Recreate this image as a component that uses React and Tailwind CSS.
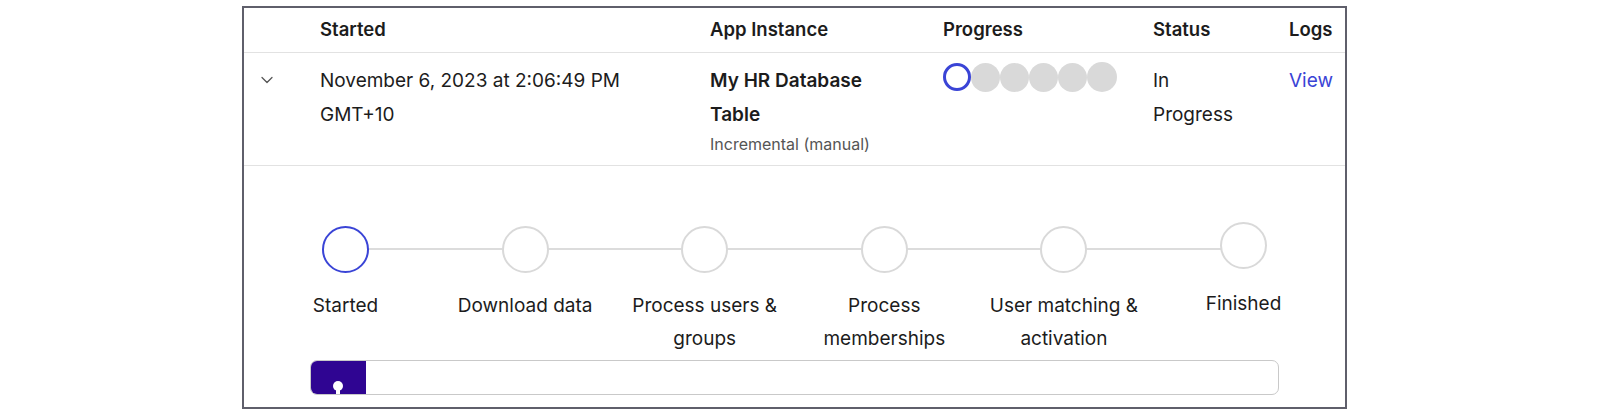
import React from "react";
import { ChevronDown } from "lucide-react";

const steps = [
  "Started",
  "Download data",
  "Process users & groups",
  "Process memberships",
  "User matching & activation",
  "Finished",
];

const Step = ({ label, index }) => {
  const active = index === 0;
  const last = index === steps.length - 1;
  return (
    <div className={"relative flex w-[179.6px] flex-col items-center " + (last ? "-mt-[4px]" : "")}>
      {!last && (
        <div className="absolute left-1/2 top-[22px] h-[2px] w-[179.6px] bg-[#dcdcdc]" />
      )}
      <div
        className={
          "relative z-10 h-[47px] w-[47px] rounded-full border-2 bg-white " +
          (active ? "border-[#3a44d6]" : "border-[#d9d9d9]")
        }
      />
      <p
        className={
          "px-[10px] text-center text-[19px] leading-[33px] text-[#1c1c1c] " +
          (last ? "mt-[18px]" : "mt-[16px]")
        }
      >
        {label}
      </p>
    </div>
  );
};

const App = () => {
  return (
    <main
      className="h-[416px] w-[1602px] bg-white pt-[6px] pl-[242px]"
      style={{ fontFamily: "Inter, 'Liberation Sans', sans-serif" }}
    >
      <div className="h-[403px] w-[1105px] border-2 border-[#5f5f6b] bg-white">
        {/* header */}
        <div className="flex h-[45px] border-b border-[#e2e2e2] text-[18.5px] font-semibold text-[#1c1c1c]">
          <div className="w-[58px]" />
          <div className="flex w-[391px] items-center pl-[18px]">Started</div>
          <div className="flex w-[234px] items-center pl-[17px]">App Instance</div>
          <div className="flex w-[210px] items-center pl-[16px]">Progress</div>
          <div className="flex w-[138px] items-center pl-[16px]">Status</div>
          <div className="flex flex-1 items-center pl-[14px]">Logs</div>
        </div>

        {/* row */}
        <div className="flex h-[113px] border-b border-[#e2e2e2] pt-[11px] text-[19px] leading-[34px] text-[#1c1c1c]">
          <div className="w-[58px] pl-[13px] pt-[6px]">
            <ChevronDown size={20} strokeWidth={1.5} className="text-[#555]" />
          </div>
          <div className="w-[391px] pl-[18px]">
            November 6, 2023 at 2:06:49 PM
            <br />
            GMT+10
          </div>
          <div className="w-[234px] pl-[17px]">
            <p className="w-[190px] font-semibold">My HR Database Table</p>
            <p className="mt-[2px] text-[16px] leading-[20px] text-[#555]">Incremental (manual)</p>
          </div>
          <div className="-mt-[1px] flex w-[210px] items-start pl-[16px]">
            <div className="flex">
              <div className="h-[28px] w-[28px] rounded-full border-[3px] border-[#3a44d6] bg-white" />
              <div className="h-[29px] w-[29px] rounded-full bg-[#d9d9d9]" />
              <div className="h-[29px] w-[29px] rounded-full bg-[#d9d9d9]" />
              <div className="h-[29px] w-[29px] rounded-full bg-[#d9d9d9]" />
              <div className="h-[29px] w-[29px] rounded-full bg-[#d9d9d9]" />
              <div className="-mt-[1px] h-[30px] w-[30px] rounded-full bg-[#d9d9d9]" />
            </div>
          </div>
          <div className="w-[138px] pl-[16px]">
            In
            <br />
            Progress
          </div>
          <div className="flex-1 pl-[14px] text-[#3a44d6]">View</div>
        </div>

        {/* stepper */}
        <div className="flex flex-col items-center pt-[60px]">
          <div className="flex h-[128px] items-start">
            {steps.map((s, i) => (
              <Step key={s} label={s} index={i} />
            ))}
          </div>
          <div className="mt-[6px] flex h-[35px] w-[969px] overflow-hidden rounded-[7px] border-[1.5px] border-[#c9c9c9]">
            <div className="relative h-full w-[55px] bg-[#2f0592]">
              <div className="absolute bottom-0 left-[25px] h-[8px] w-[4px] bg-white" />
              <div className="absolute bottom-[3px] left-[22px] h-[10px] w-[10px] rounded-full bg-white" />
            </div>
          </div>
        </div>
      </div>
    </main>
  );
};

export default App;
